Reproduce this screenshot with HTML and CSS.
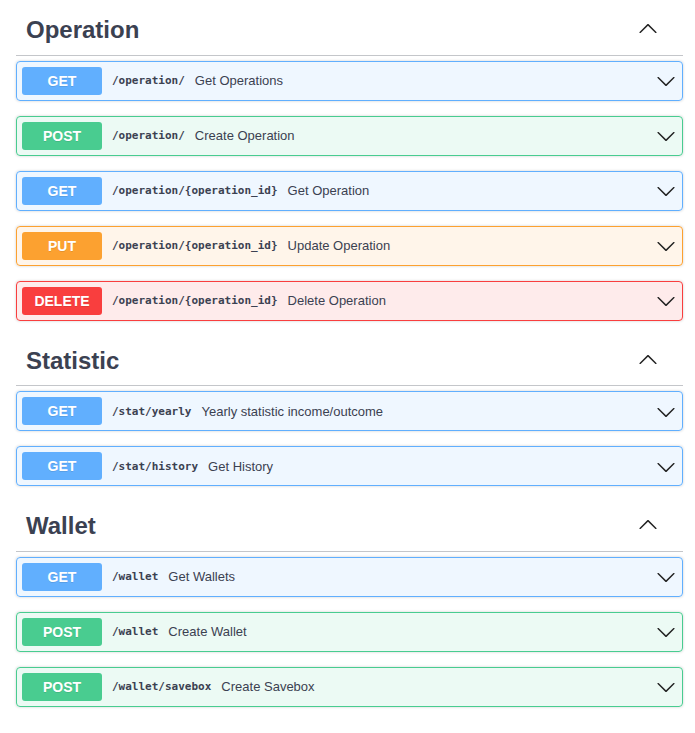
FILE: index.html
```html
<!DOCTYPE html>
<html lang="en">
<head>
<meta charset="utf-8">
<title>API</title>
<link rel="stylesheet" href="styles.css">
</head>
<body>
<div class="wrapper">

  <section class="tag-section">
    <h3 class="tag">
      <span class="tag-name">Operation</span>
      <svg class="arrow-up" viewBox="0 0 20 20" width="20" height="20"><path d="M17.418 6.109c.272-.268.709-.268.979 0s.271.701 0 .969l-7.908 7.83c-.27.268-.707.268-.979 0l-7.908-7.830c-.27-.268-.27-.701 0-.969.271-.268.709-.268.979 0L10 13.25l7.418-7.141z" transform="rotate(180 10 10.5)"/></svg>
    </h3>
    <div class="opblock get"><span class="method">GET</span><span class="path">/operation/</span><span class="summary">Get Operations</span><svg class="arrow" viewBox="0 0 20 20" width="20" height="20"><path d="M17.418 6.109c.272-.268.709-.268.979 0s.271.701 0 .969l-7.908 7.83c-.27.268-.707.268-.979 0l-7.908-7.83c-.27-.268-.27-.701 0-.969.271-.268.709-.268.979 0L10 13.25l7.418-7.141z"/></svg></div>
    <div class="opblock post"><span class="method">POST</span><span class="path">/operation/</span><span class="summary">Create Operation</span><svg class="arrow" viewBox="0 0 20 20" width="20" height="20"><path d="M17.418 6.109c.272-.268.709-.268.979 0s.271.701 0 .969l-7.908 7.83c-.27.268-.707.268-.979 0l-7.908-7.83c-.27-.268-.27-.701 0-.969.271-.268.709-.268.979 0L10 13.25l7.418-7.141z"/></svg></div>
    <div class="opblock get"><span class="method">GET</span><span class="path">/operation/{operation_id}</span><span class="summary">Get Operation</span><svg class="arrow" viewBox="0 0 20 20" width="20" height="20"><path d="M17.418 6.109c.272-.268.709-.268.979 0s.271.701 0 .969l-7.908 7.83c-.27.268-.707.268-.979 0l-7.908-7.83c-.27-.268-.27-.701 0-.969.271-.268.709-.268.979 0L10 13.25l7.418-7.141z"/></svg></div>
    <div class="opblock put"><span class="method">PUT</span><span class="path">/operation/{operation_id}</span><span class="summary">Update Operation</span><svg class="arrow" viewBox="0 0 20 20" width="20" height="20"><path d="M17.418 6.109c.272-.268.709-.268.979 0s.271.701 0 .969l-7.908 7.83c-.27.268-.707.268-.979 0l-7.908-7.83c-.27-.268-.27-.701 0-.969.271-.268.709-.268.979 0L10 13.25l7.418-7.141z"/></svg></div>
    <div class="opblock delete"><span class="method">DELETE</span><span class="path">/operation/{operation_id}</span><span class="summary">Delete Operation</span><svg class="arrow" viewBox="0 0 20 20" width="20" height="20"><path d="M17.418 6.109c.272-.268.709-.268.979 0s.271.701 0 .969l-7.908 7.83c-.27.268-.707.268-.979 0l-7.908-7.83c-.27-.268-.27-.701 0-.969.271-.268.709-.268.979 0L10 13.25l7.418-7.141z"/></svg></div>
  </section>

  <section class="tag-section">
    <h3 class="tag">
      <span class="tag-name">Statistic</span>
      <svg class="arrow-up" viewBox="0 0 20 20" width="20" height="20"><path d="M17.418 6.109c.272-.268.709-.268.979 0s.271.701 0 .969l-7.908 7.83c-.27.268-.707.268-.979 0l-7.908-7.83c-.27-.268-.27-.701 0-.969.271-.268.709-.268.979 0L10 13.25l7.418-7.141z" transform="rotate(180 10 10.5)"/></svg>
    </h3>
    <div class="opblock get"><span class="method">GET</span><span class="path">/stat/yearly</span><span class="summary">Yearly statistic income/outcome</span><svg class="arrow" viewBox="0 0 20 20" width="20" height="20"><path d="M17.418 6.109c.272-.268.709-.268.979 0s.271.701 0 .969l-7.908 7.83c-.27.268-.707.268-.979 0l-7.908-7.83c-.27-.268-.27-.701 0-.969.271-.268.709-.268.979 0L10 13.25l7.418-7.141z"/></svg></div>
    <div class="opblock get"><span class="method">GET</span><span class="path">/stat/history</span><span class="summary">Get History</span><svg class="arrow" viewBox="0 0 20 20" width="20" height="20"><path d="M17.418 6.109c.272-.268.709-.268.979 0s.271.701 0 .969l-7.908 7.83c-.27.268-.707.268-.979 0l-7.908-7.83c-.27-.268-.27-.701 0-.969.271-.268.709-.268.979 0L10 13.25l7.418-7.141z"/></svg></div>
  </section>

  <section class="tag-section">
    <h3 class="tag">
      <span class="tag-name">Wallet</span>
      <svg class="arrow-up" viewBox="0 0 20 20" width="20" height="20"><path d="M17.418 6.109c.272-.268.709-.268.979 0s.271.701 0 .969l-7.908 7.83c-.27.268-.707.268-.979 0l-7.908-7.83c-.27-.268-.27-.701 0-.969.271-.268.709-.268.979 0L10 13.25l7.418-7.141z" transform="rotate(180 10 10.5)"/></svg>
    </h3>
    <div class="opblock get"><span class="method">GET</span><span class="path">/wallet</span><span class="summary">Get Wallets</span><svg class="arrow" viewBox="0 0 20 20" width="20" height="20"><path d="M17.418 6.109c.272-.268.709-.268.979 0s.271.701 0 .969l-7.908 7.83c-.27.268-.707.268-.979 0l-7.908-7.83c-.27-.268-.27-.701 0-.969.271-.268.709-.268.979 0L10 13.25l7.418-7.141z"/></svg></div>
    <div class="opblock post"><span class="method">POST</span><span class="path">/wallet</span><span class="summary">Create Wallet</span><svg class="arrow" viewBox="0 0 20 20" width="20" height="20"><path d="M17.418 6.109c.272-.268.709-.268.979 0s.271.701 0 .969l-7.908 7.83c-.27.268-.707.268-.979 0l-7.908-7.83c-.27-.268-.27-.701 0-.969.271-.268.709-.268.979 0L10 13.25l7.418-7.141z"/></svg></div>
    <div class="opblock post"><span class="method">POST</span><span class="path">/wallet/savebox</span><span class="summary">Create Savebox</span><svg class="arrow" viewBox="0 0 20 20" width="20" height="20"><path d="M17.418 6.109c.272-.268.709-.268.979 0s.271.701 0 .969l-7.908 7.83c-.27.268-.707.268-.979 0l-7.908-7.83c-.27-.268-.27-.701 0-.969.271-.268.709-.268.979 0L10 13.25l7.418-7.141z"/></svg></div>
  </section>

</div>
</body>
</html>
```

FILE: styles.css
```css
* { box-sizing: border-box; }

html, body {
  margin: 0;
  padding: 0;
  background: #ffffff;
}

body {
  font-family: "Liberation Sans", Arial, sans-serif;
  color: #3b4151;
}

.wrapper {
  padding: 5.25px 12px 0 16px;
}

.tag {
  display: flex;
  align-items: center;
  margin: 0 0 5px;
  padding: 10px 25px 10px 10px;
  border-bottom: 1px solid rgba(59, 65, 81, 0.3);
  font-size: 24px;
  line-height: 29.5px;
  font-weight: 700;
  color: #3b4151;
}

.tag-name {
  flex: 1;
}

.arrow-up {
  display: block;
  fill: #222;
  margin-top: -4px;
}

.opblock {
  display: flex;
  align-items: center;
  height: 40px;
  margin: 0 0 15px;
  padding: 5px;
  border: 1px solid;
  border-radius: 4px;
  box-shadow: 0 0 3px rgba(0, 0, 0, 0.19);
}

.method {
  flex: none;
  width: 80px;
  height: 28px;
  line-height: 28px;
  border-radius: 3px;
  text-align: center;
  color: #ffffff;
  font-size: 14px;
  font-weight: 700;
  text-shadow: 0 1px 0 rgba(0, 0, 0, 0.1);
}

.path {
  padding: 0 10px;
  font-family: "DejaVu Sans Mono", "Liberation Mono", monospace;
  font-size: 11px;
  font-weight: 700;
  color: #3b4151;
  white-space: nowrap;
}

.summary {
  flex: 1;
  font-size: 13px;
  color: #3b4151;
  white-space: nowrap;
}

.arrow {
  display: block;
  flex: none;
  fill: #222;
  margin-right: 1px;
  margin-top: 1px;
}

.get { background: rgba(97, 175, 254, 0.1); border-color: #61affe; }
.get .method { background: #61affe; }

.post { background: rgba(73, 204, 144, 0.1); border-color: #49cc90; }
.post .method { background: #49cc90; }

.put { background: rgba(252, 161, 48, 0.1); border-color: #fca130; }
.put .method { background: #fca130; }

.delete { background: rgba(249, 62, 62, 0.1); border-color: #f93e3e; }
.delete .method { background: #f93e3e; }
```
